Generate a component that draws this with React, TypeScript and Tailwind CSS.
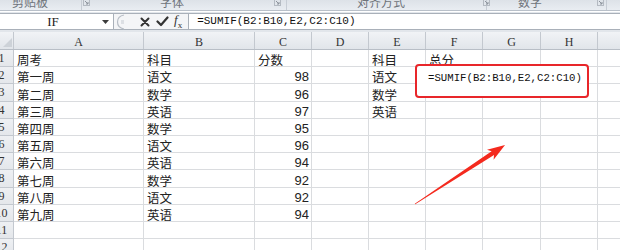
import React from 'react';

type Col = { key: string; w: string };

const cols: Col[] = [
  { key: 'A', w: 'w-[130px]' },
  { key: 'B', w: 'w-[111px]' },
  { key: 'C', w: 'w-[57px]' },
  { key: 'D', w: 'w-[57px]' },
  { key: 'E', w: 'w-[57px]' },
  { key: 'F', w: 'w-[57px]' },
  { key: 'G', w: 'w-[58px]' },
  { key: 'H', w: 'w-[57px]' },
  { key: 'I', w: 'w-[57px]' },
];

// cell values per row, keyed by column letter
const rows: Record<string, string | number>[] = [
  { A: '周考', B: '科目', C: '分数', E: '科目', F: '总分' },
  { A: '第一周', B: '语文', C: 98, E: '语文' },
  { A: '第二周', B: '数学', C: 96, E: '数学' },
  { A: '第三周', B: '英语', C: 97, E: '英语' },
  { A: '第四周', B: '数学', C: 95 },
  { A: '第五周', B: '语文', C: 96 },
  { A: '第六周', B: '英语', C: 94 },
  { A: '第七周', B: '数学', C: 92 },
  { A: '第八周', B: '语文', C: 92 },
  { A: '第九周', B: '英语', C: 94 },
  {},
  {},
];

const ribbonGroups = [
  { label: '剪贴板', w: 'w-[82px]', pad: 'pl-[12px]', launcher: 'ml-[35px]' },
  { label: '字体', w: 'w-[205px]', pad: 'pl-[78px]', launcher: 'ml-[90px]' },
  { label: '对齐方式', w: 'w-[200px]', pad: 'pl-[70px]', launcher: 'ml-[78px]' },
  { label: '数字', w: 'w-[120px]', pad: 'pl-[31px]', launcher: 'ml-[55px]' },
];

const cjk = "font-['Noto_Sans_CJK_SC',sans-serif]";

const Launcher: React.FC = () => (
  <svg width="7" height="7" viewBox="0 0 7 7" className="shrink-0">
    <rect x="0.5" y="0.5" width="6" height="6" fill="none" stroke="#b4bac2" />
    <path d="M2 2 L5 5 M5 3 V5 H3" stroke="#8c939c" fill="none" />
  </svg>
);

const App: React.FC = () => {
  return (
    <div className="relative w-[620px] h-[250px] overflow-hidden bg-white">
      {/* ribbon group labels, cut off at the top */}
      <div className="flex h-[11px] overflow-hidden border-b border-[#b9c0c9] bg-gradient-to-b from-[#dde2e8] to-[#e9edf2]">
        {ribbonGroups.map(g => (
          <div key={g.label} className={`${g.w} ${g.pad} flex items-start shrink-0 border-r border-[#c7cdd5]`}>
            <span className={`${cjk} text-[12px] leading-[12px] -mt-[4px] text-[#6e737a] whitespace-nowrap`}>{g.label}</span>
            <span className={`${g.launcher} -mt-[1px]`}>
              <Launcher />
            </span>
          </div>
        ))}
      </div>

      {/* formula bar */}
      <div className="flex h-[21px] bg-[#e2e6eb] pt-[1px] pb-[2px] border-t border-white">
        <div className="flex w-[114px] items-center bg-white border-y border-r border-[#a9b0b9]">
          <span className="flex-1 pl-[4px] text-center font-['Liberation_Serif',serif] text-[13px] text-[#222]">IF</span>
          <svg width="7" height="4" viewBox="0 0 7 4" className="mr-[4px]">
            <path d="M0 0 H7 L3.5 4 Z" fill="#3c3c3c" />
          </svg>
        </div>
        <div className="flex flex-1 items-center bg-[#f4f5f7] border-y border-[#a9b0b9]">
          <svg width="10" height="16" viewBox="0 0 10 16" className="ml-[2px]">
            <path d="M8 1 C3 2 1.5 5 1.5 8 C1.5 11 3 14 8 15" fill="none" stroke="#b7bdc5" strokeWidth="1.2" />
            <path d="M5 7 H8 M5 9 H8" stroke="#c5cad1" strokeWidth="1" />
          </svg>
          <svg width="10" height="10" viewBox="0 0 10 10" className="ml-[14px]">
            <path d="M1.5 1.5 L8.5 8.5 M8.5 1.5 L1.5 8.5" stroke="#333" strokeWidth="2" strokeLinecap="round" />
          </svg>
          <svg width="13" height="11" viewBox="0 0 13 11" className="ml-[6px]">
            <path d="M1.5 5.5 L5 9 L11.5 1.5" stroke="#333" strokeWidth="2.2" fill="none" strokeLinecap="round" strokeLinejoin="round" />
          </svg>
          <span className="ml-[5px] font-['Liberation_Serif',serif] italic text-[13px] leading-none text-[#333]">
            f<span className="text-[9px] not-italic align-sub">x</span>
          </span>
          <div className="ml-[6px] flex h-full flex-1 items-center bg-white border-l border-[#a9b0b9] pl-[8px]">
            <span className="font-['Liberation_Mono',monospace] text-[11px] text-[#111] whitespace-nowrap">
              =SUMIF(B2:B10,E2,C2:C10)
            </span>
          </div>
        </div>
      </div>

      {/* sheet */}
      <div className="flex flex-col">
        {/* column headers */}
        <div className="flex h-[18px] bg-gradient-to-b from-[#f1f3f6] to-[#e1e5ea] border-b border-[#b8bec6]">
          <div className="relative w-[14px] shrink-0 border-r border-[#c3c8cf]">
            <svg width="9" height="9" viewBox="0 0 9 9" className="absolute right-[1px] bottom-[2px]">
              <path d="M9 0 V9 H0 Z" fill="#cdd2d8" />
            </svg>
          </div>
          {cols.map(c => (
            <div
              key={c.key}
              className={`${c.w} shrink-0 flex items-end justify-center border-r border-[#c3c8cf] font-['Liberation_Serif',serif] text-[12px] leading-[14px] text-[#333]`}
            >
              {c.key}
            </div>
          ))}
        </div>

        {rows.map((r, i) => (
          <div key={i} className="flex h-[17.2px]">
            <div className="w-[14px] shrink-0 overflow-hidden bg-gradient-to-b from-[#eef0f3] to-[#e4e7eb] border-r border-b border-[#c3c8cf]">
              <div className="w-[25px] -ml-[11px] text-center font-['Liberation_Serif',serif] text-[12px] leading-[17px] text-[#333]">
                {i + 1}
              </div>
            </div>
            {cols.map(c => {
              const v = r[c.key];
              const isNum = typeof v === 'number';
              return (
                <div
                  key={c.key}
                  className={`${c.w} shrink-0 flex items-end overflow-hidden border-r border-b border-[#dadcdf] ${
                    isNum ? 'justify-end pr-[2px]' : 'pl-[3px]'
                  }`}
                >
                  {v !== undefined && (
                    <span
                      className={`whitespace-nowrap text-[#222] ${
                        isNum ? "font-['Liberation_Sans',sans-serif] text-[13px] leading-[13px]" : `${cjk} text-[12.5px] leading-[12px]`
                      }`}
                    >
                      {v}
                    </span>
                  )}
                </div>
              );
            })}
          </div>
        ))}
      </div>

      {/* editing cell F2, highlighted */}
      <div className="absolute left-[415px] top-[64px] flex w-[174px] h-[34px] items-start bg-white border-2 border-[#e8262a] rounded-[4px] pl-[11px] pt-[5px] leading-[14px]">
        <span className="font-['Liberation_Mono',monospace] text-[10.7px] leading-[14px] text-[#111] whitespace-nowrap">
          =SUMIF(B2:B10,E2,C2:C10)
        </span>
      </div>

      {/* annotation arrow */}
      <svg className="absolute left-0 top-0 pointer-events-none" width="620" height="250" viewBox="0 0 620 250">
        <g transform="translate(415,204) rotate(-33.2)">
          <polygon points="0,-0.4 93,-2.2 90,-6 107.6,0 90,6 93,2.2 0,0.4" fill="#f42a1e" />
        </g>
      </svg>
    </div>
  );
};

export default App;
